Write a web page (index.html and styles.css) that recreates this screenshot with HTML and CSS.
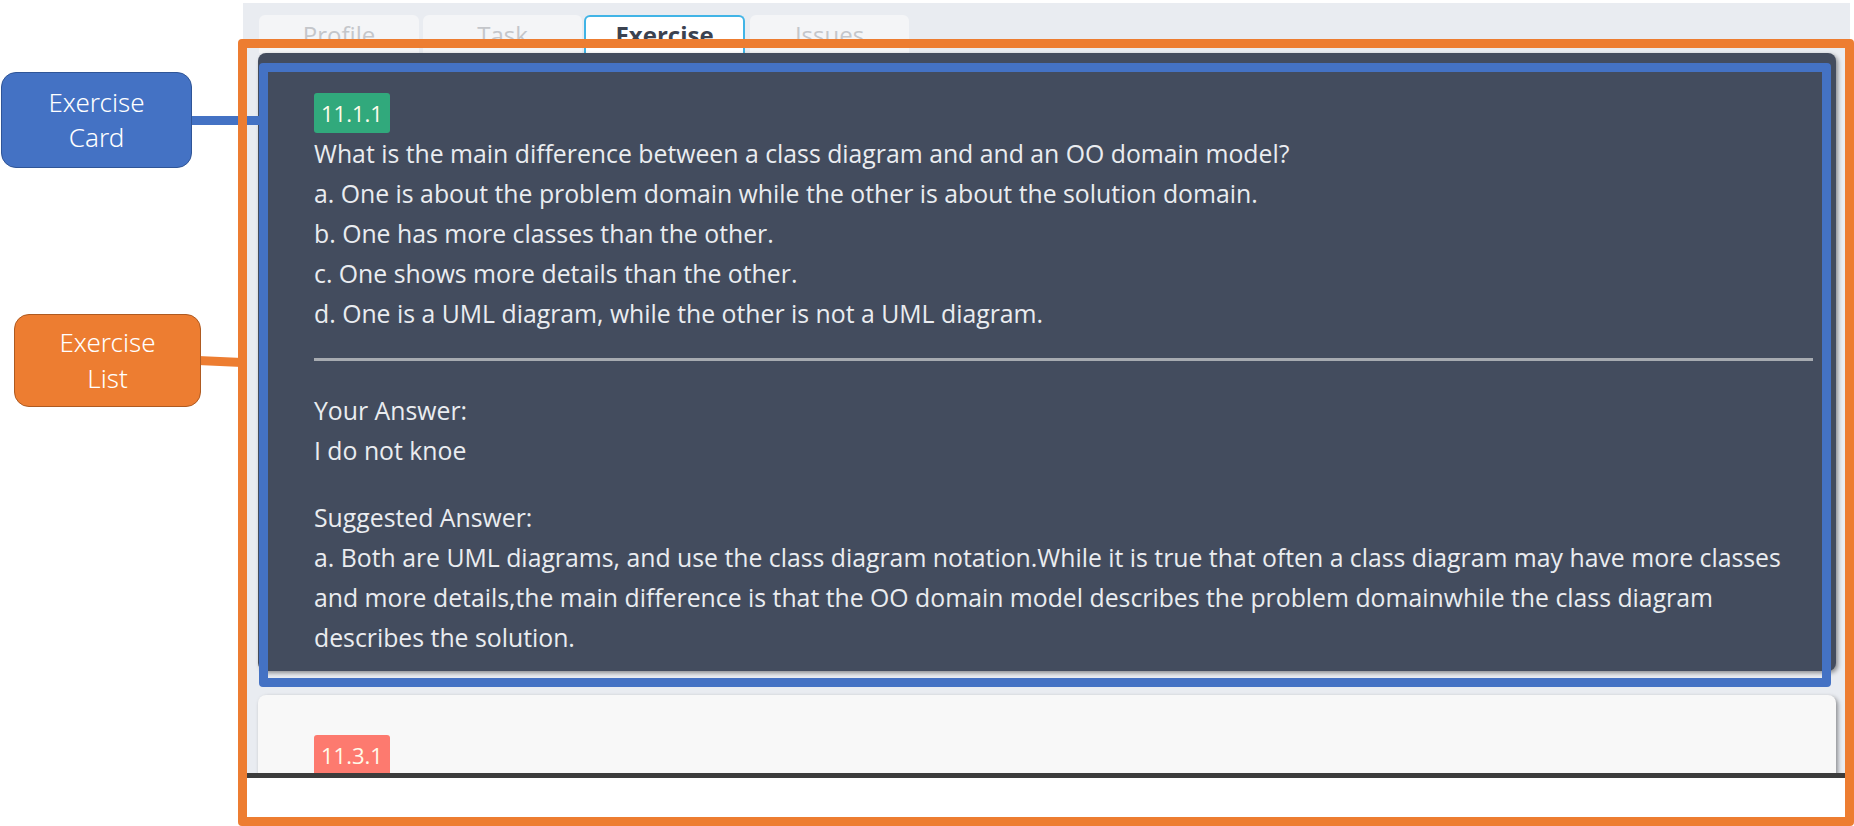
FILE: index.html
```html
<!DOCTYPE html>
<html>
<head>
<meta charset="utf-8">
<title>Exercise</title>
<link rel="stylesheet" href="styles.css">
</head>
<body>
<div class="stage">
  <div class="shot">
    <div class="tabs">
      <div class="tab">Profile</div>
      <div class="tab tab-task">Task</div>
      <div class="tab active">Exercise</div>
      <div class="tab tab-issues">Issues</div>
    </div>
    <div class="list">
      <div class="card dark">
        <span class="badge green">11.1.1</span>
        <p class="line">What is the main difference between a class diagram and and an OO domain model?</p>
        <p class="line">a. One is about the problem domain while the other is about the solution domain.</p>
        <p class="line">b. One has more classes than the other.</p>
        <p class="line">c. One shows more details than the other.</p>
        <p class="line">d. One is a UML diagram, while the other is not a UML diagram.</p>
        <hr class="sep">
        <p class="line">Your Answer:</p>
        <p class="line">I do not knoe</p>
        <p class="line gap">Suggested Answer:</p>
        <p class="line">a. Both are UML diagrams, and use the class diagram notation.While it is true that often a class diagram may have more classes and more details,the main difference is that the OO domain model describes the problem domainwhile the class diagram describes the solution.</p>
      </div>
      <div class="card light">
        <span class="badge salmon">11.3.1</span>
      </div>
    </div>
  </div>
  <div class="bottombar"></div>

  <div class="wire wire-blue"></div>
  <div class="wire wire-orange"></div>
  <div class="frame frame-blue"></div>
  <div class="frame frame-orange"></div>
  <div class="callout callout-blue">Exercise<br>Card</div>
  <div class="callout callout-orange">Exercise<br>List</div>
</div>
</body>
</html>
```

FILE: styles.css
```css
* { box-sizing: border-box; }

html, body {
  margin: 0;
  padding: 0;
  background: #ffffff;
}

.stage {
  position: relative;
  width: 1854px;
  height: 826px;
  overflow: hidden;
  background: #ffffff;
  font-family: "Open Sans", "Noto Sans", sans-serif;
}

.shot {
  margin: 3px 0 0 243px;
  width: 1607px;
  height: 770px;
  overflow: hidden;
  background: #e9ecf1;
}

.tabs {
  display: flex;
  padding: 12px 0 0 16px;
  height: 50px;
}

.tab {
  width: 160px;
  height: 38px;
  background: #f4f5f7;
  border-radius: 6px 6px 0 0;
  color: #c4c6ca;
  font-size: 24px;
  line-height: 40px;
  text-align: center;
  overflow: hidden;
}

.tab-task {
  width: 159px;
  margin-left: 4px;
}

.tab.active {
  width: 161px;
  margin-left: 2px;
  background: #ffffff;
  border: 2px solid #41b4e6;
  border-bottom: none;
  color: #3b4250;
  font-weight: 700;
  line-height: 36px;
}

.tab-issues {
  width: 159px;
  margin-left: 5px;
}

.list {
  padding: 0 14px 0 15px;
  display: flex;
  flex-direction: column;
  gap: 24px;
}

.card {
  border-radius: 8px;
  padding: 40px 23px 14px 56px;
  box-shadow: 2px 2px 4px rgba(0, 0, 0, 0.4);
}

.card.dark {
  background: #434c5e;
  color: #eaecf0;
}

.card.light {
  background: #f8f8f8;
  height: 120px;
}

.badge {
  display: inline-block;
  vertical-align: top;
  height: 40px;
  padding: 0 7px;
  border-radius: 3px;
  color: #fffbea;
  font-size: 22px;
  line-height: 40px;
}

.badge.green { background: #31a97c; }
.badge.salmon { background: #fd7a6f; }

.line {
  margin: 0;
  font-size: 24.8px;
  line-height: 40px;
}

.line.gap { margin-top: 27px; }

.sep {
  margin: 25px 0 29px 0;
  height: 3px;
  border: none;
  background: #a7abb1;
}

.bottombar {
  margin-left: 243px;
  width: 1607px;
  height: 5px;
  background: #3c3c3c;
}

/* annotation overlays */
.frame {
  position: absolute;
  border-style: solid;
  border-width: 9px;
  border-radius: 4px;
}

.frame-orange {
  left: 238px;
  top: 39px;
  width: 1616px;
  height: 787px;
  border-color: #ed7d31;
}

.frame-blue {
  left: 259px;
  top: 63px;
  width: 1572px;
  height: 624px;
  border-color: #4472c4;
}

.wire {
  position: absolute;
  height: 9px;
}

.wire-blue {
  left: 190px;
  top: 116px;
  width: 72px;
  background: #4472c4;
}

.wire-orange {
  left: 198px;
  top: 357px;
  width: 44px;
  background: #ed7d31;
  transform: rotate(2.3deg);
}

.callout {
  position: absolute;
  display: flex;
  align-items: center;
  justify-content: center;
  text-align: center;
  color: #ffffff;
  font-family: "Noto Sans", "Open Sans", sans-serif;
  font-weight: 300;
  font-size: 26px;
  line-height: 35.5px;
  border-radius: 15px;
}

.callout-blue {
  left: 1px;
  top: 72px;
  width: 191px;
  height: 96px;
  background: #4472c4;
  border: 1.5px solid #2f5597;
}

.callout-orange {
  left: 14px;
  top: 314px;
  width: 187px;
  height: 93px;
  background: #ed7d31;
  border: 1.5px solid #ae5a21;
}
```
